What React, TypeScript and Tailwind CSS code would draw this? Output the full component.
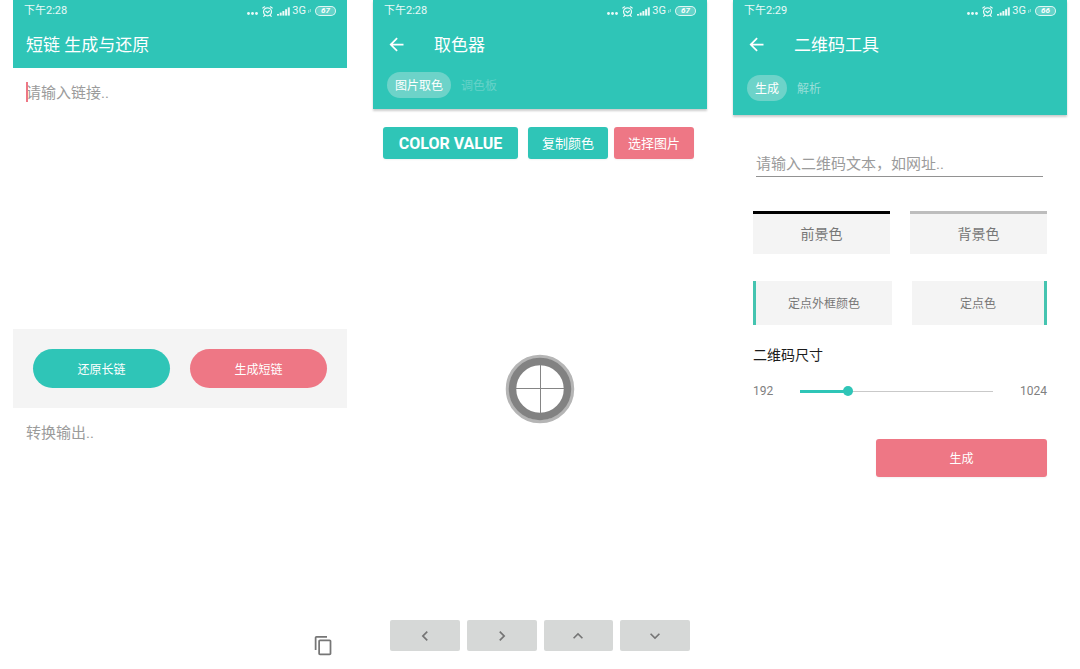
import { useState } from "react";
import type { ReactNode } from "react";
import {
  MdArrowBack,
  MdContentCopy,
  MdKeyboardArrowDown,
  MdKeyboardArrowLeft,
  MdKeyboardArrowRight,
  MdKeyboardArrowUp,
} from "react-icons/md";

function StatusBar({ time, battery }: { time: string; battery: string }) {
  return (
    <div className="flex h-5 items-center justify-between pt-0.5 pr-[11px] pl-[11px] text-[11px] leading-4 text-white/90">
      <span>{time}</span>
      <div className="flex items-center gap-1">
        <svg className="mt-1 h-[3px] w-[11px]" viewBox="0 0 11 3" fill="currentColor">
          <circle cx="1.5" cy="1.5" r="1.4" />
          <circle cx="5.5" cy="1.5" r="1.4" />
          <circle cx="9.5" cy="1.5" r="1.4" />
        </svg>
        <svg
          className="h-[11px] w-[11px]"
          viewBox="0 0 11 11"
          fill="none"
          stroke="currentColor"
          strokeWidth="1.2"
          strokeLinecap="round"
        >
          <circle cx="5.5" cy="5.8" r="4" />
          <path d="M.8 2 2.6.8M10.2 2 8.4.8M3.8 5.3 5.5 6.8 7.4 5M2.6 9.4l-.8.9M8.4 9.4l.8.9" />
        </svg>
        <svg className="h-[9px] w-[13px]" viewBox="0 0 13 9" fill="currentColor">
          <rect x="0" y="7" width="2" height="1.6" />
          <rect x="2.7" y="5.6" width="2" height="3" />
          <rect x="5.4" y="4" width="2" height="4.6" />
          <rect x="8.1" y="2.2" width="2" height="6.4" />
          <rect x="10.8" y="0.4" width="2" height="8.2" />
        </svg>
        <span className="-ml-0.5">3G</span>
        <svg className="-ml-0.5 h-1 w-[3px]" viewBox="0 0 3 4" stroke="currentColor" strokeWidth="0.8">
          <path d="M.7 1v3M2.3 0v3" opacity="0.7" />
        </svg>
        <span className="flex h-2.5 w-[21px] items-center justify-center rounded-full border border-white/80 bg-white/25 text-[8px] leading-none font-bold text-white italic">
          {battery}
        </span>
      </div>
    </div>
  );
}

function TitleRow({ title, back }: { title: string; back?: boolean }) {
  return (
    <div className="flex h-12 items-center text-[17px] leading-6 text-white">
      {back && (
        <button type="button" aria-label="返回" className="ml-[13px] mr-[27px]">
          <MdArrowBack className="size-[21px]" />
        </button>
      )}
      <h1 className={back ? "pt-0.5" : "ml-[13px] pt-0.5"}>{title}</h1>
    </div>
  );
}

function Tabs({ items, inactive }: { items: string[]; inactive: string }) {
  const [active, setActive] = useState(0);
  return (
    <nav className="flex gap-0.5 px-3.5 text-xs">
      {items.map((item, i) => (
        <button
          key={item}
          type="button"
          onClick={() => setActive(i)}
          className={`h-[26px] rounded-full px-2 pt-0.5 ${i === active ? "bg-[#6dd3c9] text-white" : inactive}`}
        >
          {item}
        </button>
      ))}
    </nav>
  );
}

function LinkPanel() {
  return (
    <section className="flex flex-col">
      <header className="bg-[#2fc5b7]">
        <StatusBar time="下午2:28" battery="67" />
        <TitleRow title="短链 生成与还原" />
      </header>
      <div className="relative flex flex-1">
        <textarea
          aria-label="链接"
          placeholder="请输入链接.."
          className="w-full resize-none px-[13px] py-[13px] text-[15px] leading-6 text-gray-700 caret-[#ee7785] outline-none placeholder:text-[#9b9b9b]"
        />
        <span className="absolute top-3.5 left-[13px] h-5 w-0.5 bg-[#ee7785]" />
      </div>
      <div className="grid grid-cols-2 gap-5 bg-[#f4f4f4] p-5 text-xs text-white">
        <button type="button" className="h-[39px] rounded-full bg-[#2fc5b7] pt-0.5">
          还原长链
        </button>
        <button type="button" className="h-[39px] rounded-full bg-[#ee7785] pt-0.5">
          生成短链
        </button>
      </div>
      <div className="flex flex-1 flex-col justify-between">
        <output className="px-[13px] py-[13px] text-[15px] leading-6 text-[#9b9b9b]">转换输出..</output>
        <button type="button" aria-label="复制" className="mr-[13px] mb-[13px] self-end text-[#767676]">
          <MdContentCopy className="size-[21px]" />
        </button>
      </div>
    </section>
  );
}

function ArrowButton({ label, children }: { label: string; children: ReactNode }) {
  return (
    <button
      type="button"
      aria-label={label}
      className="flex h-[31px] items-center justify-center rounded-xs bg-[#d6d8d7] text-xl text-[#757575]"
    >
      {children}
    </button>
  );
}

function ColorPanel() {
  return (
    <section className="flex flex-col">
      <header className="bg-[#2fc5b7] pb-[11px] shadow-[0_2px_2px_rgba(0,0,0,0.2)]">
        <StatusBar time="下午2:28" battery="67" />
        <TitleRow title="取色器" back />
        <div className="pt-1">
          <Tabs items={["图片取色", "调色板"]} inactive="text-[#66d2c8]" />
        </div>
      </header>
      <div className="flex pt-[18px] pr-[13px] pl-2.5 text-[13px] text-white">
        <button
          type="button"
          className="h-8 flex-1 rounded-[3px] bg-[#2fc5b7] pt-0.5 text-base font-bold whitespace-nowrap shadow-xs"
        >
          COLOR VALUE
        </button>
        <button type="button" className="ml-2.5 h-8 w-20 rounded-[3px] bg-[#2fc5b7] pt-0.5 shadow-xs">
          复制颜色
        </button>
        <button type="button" className="ml-1.5 h-8 w-20 rounded-[3px] bg-[#ee7785] pt-0.5 shadow-xs">
          选择图片
        </button>
      </div>
      <div className="flex flex-1 items-center justify-center pb-0.5">
        <svg className="size-[70px]" viewBox="0 0 70 70" fill="none">
          <circle cx="35" cy="35" r="32.5" stroke="#b5b5b5" strokeWidth="3.5" />
          <circle cx="35" cy="35" r="27.5" stroke="#828282" strokeWidth="7.5" />
          <path d="M35.5 11v48M11 34.5h48" stroke="#858585" />
        </svg>
      </div>
      <div className="grid grid-cols-4 gap-[7px] px-[17px] pb-[18px]">
        <ArrowButton label="向左">
          <MdKeyboardArrowLeft />
        </ArrowButton>
        <ArrowButton label="向右">
          <MdKeyboardArrowRight />
        </ArrowButton>
        <ArrowButton label="向上">
          <MdKeyboardArrowUp />
        </ArrowButton>
        <ArrowButton label="向下">
          <MdKeyboardArrowDown />
        </ArrowButton>
      </div>
    </section>
  );
}

const MIN_SIZE = 192;
const MAX_SIZE = 1024;

function SizeSlider() {
  const [size, setSize] = useState(386);
  const percent = ((size - MIN_SIZE) / (MAX_SIZE - MIN_SIZE)) * 100;
  return (
    <div className="mt-[18px] flex items-center gap-[27px] text-xs leading-4 text-[#808080]">
      <span>{MIN_SIZE}</span>
      <input
        id="qr-size"
        type="range"
        min={MIN_SIZE}
        max={MAX_SIZE}
        value={size}
        onChange={(e) => setSize(Number(e.target.value))}
        style={{ backgroundSize: `${percent}% 3px, 100% 1px` }}
        className="h-2.5 min-w-0 flex-1 appearance-none bg-[linear-gradient(#2fc5b7,#2fc5b7),linear-gradient(#c9c9c9,#c9c9c9)] bg-left bg-no-repeat [&::-webkit-slider-thumb]:size-2.5 [&::-webkit-slider-thumb]:appearance-none [&::-webkit-slider-thumb]:rounded-full [&::-webkit-slider-thumb]:bg-[#2fc5b7]"
      />
      <span>{MAX_SIZE}</span>
    </div>
  );
}

function QrPanel() {
  return (
    <section className="flex flex-col">
      <header className="bg-[#2fc5b7] pb-3.5 shadow-[0_2px_2px_rgba(0,0,0,0.2)]">
        <StatusBar time="下午2:29" battery="66" />
        <TitleRow title="二维码工具" back />
        <div className="pt-[7px]">
          <Tabs items={["生成", "解析"]} inactive="text-[#97ded7]" />
        </div>
      </header>
      <div className="flex flex-col px-5 pt-9">
        <input
          type="text"
          aria-label="二维码文本"
          placeholder="请输入二维码文本，如网址.."
          className="mr-1 ml-[3px] h-[26px] min-w-0 border-b border-[#929292] text-[15px] leading-6 text-gray-700 outline-none placeholder:text-[#9b9b9b]"
        />
        <div className="mt-[34px] grid grid-cols-2 gap-5 text-sm text-[#777]">
          <button type="button" className="h-[43px] border-t-3 border-black bg-[#f4f4f4]">
            前景色
          </button>
          <button type="button" className="h-[43px] border-t-3 border-[#bdbdbd] bg-[#f4f4f4]">
            背景色
          </button>
        </div>
        <div className="mt-[27px] grid grid-cols-[139fr_135fr] gap-5 text-xs text-[#777]">
          <button type="button" className="h-11 border-l-3 border-[#45c4b0] bg-[#f4f4f4] pt-0.5">
            定点外框颜色
          </button>
          <button type="button" className="h-11 border-r-3 border-[#45c4b0] bg-[#f4f4f4] pt-0.5">
            定点色
          </button>
        </div>
        <label htmlFor="qr-size" className="mt-5 text-sm leading-5 text-[#1c1c1c]">
          二维码尺寸
        </label>
        <SizeSlider />
        <button
          type="button"
          className="mt-10 h-[38px] w-[171px] self-end rounded-[3px] bg-[#ee7785] pt-0.5 text-xs text-white shadow-xs"
        >
          生成
        </button>
      </div>
    </section>
  );
}

export default function App() {
  return (
    <main className="grid min-h-screen grid-cols-3 gap-[26px] bg-white px-[13px] font-[Roboto,'Noto_Sans_CJK_SC',sans-serif]">
      <LinkPanel />
      <ColorPanel />
      <QrPanel />
    </main>
  );
}
